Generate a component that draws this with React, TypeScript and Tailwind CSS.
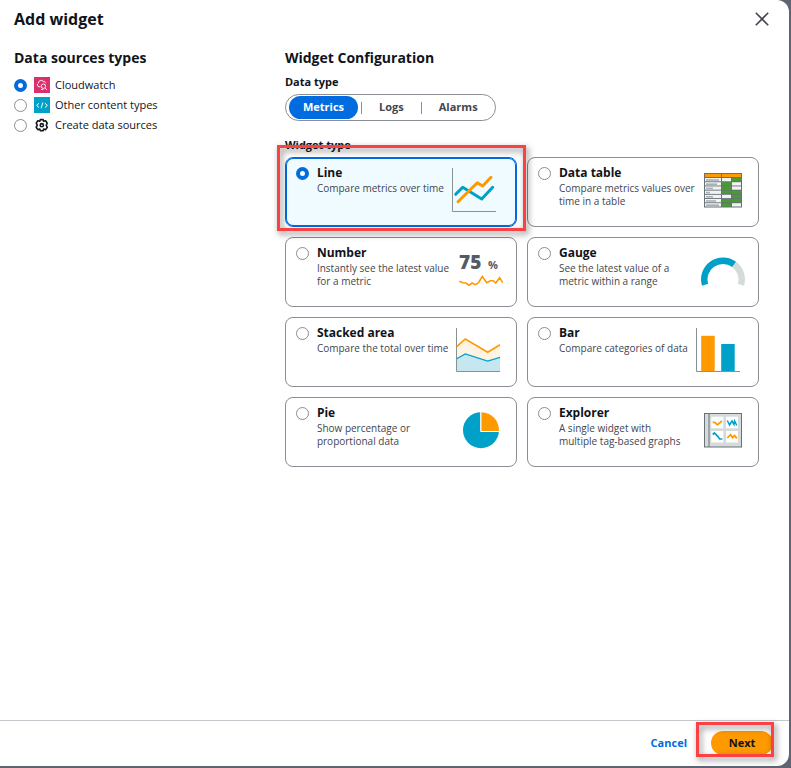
import { useState, type ReactNode } from "react";

const TEAL = "#00a1c9";
const ORANGE = "#ff9900";
const AXIS = "#879196";

function LineArt() {
  return (
    <>
      <path d="M.5 0V43.5H44" stroke={AXIS} />
      <path d="M3.7 26.3 10.7 19.3 29.7 31 40.7 19.3" stroke={TEAL} strokeWidth="3" strokeLinecap="round" strokeLinejoin="round" />
      <path d="M6 33.7 25.3 14.7 30.7 18 39 9.3" stroke={ORANGE} strokeWidth="3" strokeLinecap="round" strokeLinejoin="round" />
    </>
  );
}

const TABLE_ROWS: [number, boolean, boolean][] = [
  [13, false, true],
  [11, true, false],
  [7, true, false],
  [4, true, true],
  [7, false, true],
  [10, true, true],
  [13, true, false],
];

function TableArt() {
  return (
    <>
      <rect x="3" y="5" width="38" height="34.5" fill="#687078" />
      <rect x="4" y="6" width="16" height="3" fill={ORANGE} />
      <rect x="21" y="6" width="19" height="3" fill={ORANGE} />
      {TABLE_ROWS.map(([bar, second, third], i) => {
        const y = 10 + i * 4.2;
        return (
          <g key={i}>
            <rect x="4" y={y} width="16" height="3.3" fill="#f2f3f3" />
            <rect x="5" y={y + 1.2} width={bar} height="1.6" fill="#aab1b5" />
            <rect x="21" y={y} width="9" height="3.3" fill={second ? "#4a9a36" : "#f2f3f3"} />
            <rect x="31" y={y} width="9" height="3.3" fill={third ? "#4a9a36" : "#f2f3f3"} />
          </g>
        );
      })}
    </>
  );
}

function NumberArt() {
  return (
    <>
      <text x="0" y="21" fontSize="19" fontWeight="800" fill="#545b64">75</text>
      <text x="29" y="21" fontSize="11" fontWeight="700" fill="#545b64">%</text>
      <path
        d="M.3 33.3 3.7 34.7 7 35 10 37.3 13 35 16.3 36.7 19.3 35 23.3 28.5 27.7 34.7 31.3 32.7H34.3L36.7 35 40.7 29.7 43.7 34.7"
        stroke={ORANGE}
        strokeWidth="1.6"
      />
    </>
  );
}

function GaugeArt() {
  return (
    <>
      <path d="M33.1 16.3A18.7 18.7 0 0 1 39.9 36.8" stroke="#d5dbdb" strokeWidth="6.5" />
      <path d="M4.1 36.8A18.7 18.7 0 0 1 33.1 16.3" stroke={TEAL} strokeWidth="6.5" />
    </>
  );
}

function AreaArt() {
  return (
    <>
      <path d="M.7 18.7 9.3 11 31.7 24.3 44 16.7V43H.7Z" fill="#fff3e3" />
      <path d="M.7 30.7 9.3 26 31.7 33 44 29.3V43H.7Z" fill="#c6e6f0" />
      <path d="M.5 0V43.5H44" stroke={AXIS} />
      <path d="M.7 18.7 9.3 11 31.7 24.3 44 16.7" stroke={ORANGE} strokeWidth="1.6" />
      <path d="M.7 30.7 9.3 26 31.7 33 44 29.3" stroke={TEAL} strokeWidth="1.3" />
    </>
  );
}

function BarArt() {
  return (
    <>
      <path d="M.5 0V43.5H44" stroke={AXIS} />
      <rect x="5.2" y="7.8" width="13.5" height="35.2" fill={ORANGE} />
      <rect x="25.2" y="16" width="13.5" height="27" fill={TEAL} />
    </>
  );
}

function PieArt() {
  return (
    <>
      <circle cx="22" cy="22.2" r="18" fill={TEAL} />
      <path d="M21.7 23.5V3.5H41V23.5Z" fill="#fff" />
      <path d="M22.3 4.2A18 18 0 0 1 40 23H22.3Z" fill={ORANGE} />
      <path d="M21.7 3.5V23.5H41" stroke="#fff" />
    </>
  );
}

function ExplorerArt() {
  return (
    <>
      <rect x="3.5" y="5.5" width="37" height="33.5" fill="#d5dbdb" stroke="#687078" />
      <path d="M8 5.5V39" stroke="#687078" />
      <path d="M10.3 8.7h12v11.6h-12zM25 8.7h12v11.6H25zM10.3 23h12v11.6h-12zM25 23h12v11.6H25z" fill="#fff" />
      <path d="M11.7 14.4H13.8L16.3 16.8 21 13" stroke={ORANGE} strokeWidth="1.7" />
      <path d="M26.3 12.5 28.5 17 31 13 33 16.6 33.6 13 35.8 17.5" stroke={TEAL} strokeWidth="1.5" />
      <path d="M11.7 26.5 13.4 25 17 28.6 18.6 31H21.3" stroke={TEAL} strokeWidth="1.7" />
      <path d="M26.3 30 29.6 26.6 31.5 29.6 33.5 27.6 36 30.4" stroke={ORANGE} strokeWidth="1.7" />
    </>
  );
}

const WIDGETS: { name: string; text: string; art: ReactNode }[] = [
  { name: "Line", text: "Compare metrics over time", art: <LineArt /> },
  { name: "Data table", text: "Compare metrics values over\ntime in a table", art: <TableArt /> },
  { name: "Number", text: "Instantly see the latest value\nfor a metric", art: <NumberArt /> },
  { name: "Gauge", text: "See the latest value of a\nmetric within a range", art: <GaugeArt /> },
  { name: "Stacked area", text: "Compare the total over time", art: <AreaArt /> },
  { name: "Bar", text: "Compare categories of data", art: <BarArt /> },
  { name: "Pie", text: "Show percentage or\nproportional data", art: <PieArt /> },
  { name: "Explorer", text: "A single widget with\nmultiple tag-based graphs", art: <ExplorerArt /> },
];

const RADIO =
  "size-[13px] shrink-0 appearance-none rounded-full border border-[#8c8c94] bg-white checked:border-4 checked:border-[#006ce0]";

function Callout({ className }: { className: string }) {
  return (
    <div
      className={`pointer-events-none absolute z-10 border-3 border-[#fb4143] drop-shadow-[2px_3px_3px_rgba(0,0,0,0.5)] ${className}`}
    />
  );
}

const SOURCES: { name: string; icon: ReactNode }[] = [
  {
    name: "Cloudwatch",
    icon: (
      <svg viewBox="0 0 16 16" className="size-4" fill="none" stroke="#fff" strokeWidth=".9">
        <rect width="16" height="16" fill="#dc2f6e" stroke="none" />
        <path d="M6.3 9.8H5A1.9 1.9 0 0 1 4.4 6.2 2.7 2.7 0 0 1 9.2 4.4C10.6 4.2 11.4 5 11.6 6.2" />
        <circle cx="9.4" cy="9.2" r="2.2" />
        <path d="M11 10.9 13 13M7 12.4H9.4" />
      </svg>
    ),
  },
  {
    name: "Other content types",
    icon: (
      <svg viewBox="0 0 16 16" className="size-4" fill="none" stroke="#fff" strokeWidth="1">
        <rect width="16" height="16" fill="#00a1c9" stroke="none" />
        <path d="M5 6.3 2.6 8.4 5 10.5M11 6.3 13.4 8.4 11 10.5M8.9 5.5 7.1 11.3" />
      </svg>
    ),
  },
  {
    name: "Create data sources",
    icon: (
      <svg viewBox="0 0 16 16" className="size-4" fill="none" stroke="#16191f" strokeWidth="1.6" strokeLinejoin="round">
        <path d="M6.4 2.6H9.1L9.6 4.3 11.6 3.8 13.3 6.2 12.2 8.1 13.3 10.3 11.7 12.6 9.6 12.1 9.1 13.8H6.4L5.8 12.1 3.8 12.6 2.2 10.2 3.3 8.1 2.2 6.1 3.8 3.8 5.8 4.3Z" />
        <circle cx="7.8" cy="8.2" r="1.6" />
      </svg>
    ),
  },
];

export default function App() {
  const [source, setSource] = useState("Cloudwatch");
  const [dataType, setDataType] = useState("Metrics");
  const [widget, setWidget] = useState("Line");

  return (
    <div className="flex min-h-screen flex-col bg-[#5f6473] pr-0.5 pb-0.5 font-['Open_Sans','Noto_Sans',sans-serif] text-[#0f141a]">
      <div role="dialog" aria-labelledby="title" className="flex flex-1 flex-col rounded-r-xl bg-white">
        <header className="flex items-center justify-between pt-[7px] pr-5 pl-3.5">
          <h1 id="title" className="text-base leading-6 font-bold">Add widget</h1>
          <button type="button" aria-label="Close">
            <svg viewBox="0 0 14 14" className="size-3.5" stroke="#424650" strokeWidth="1.6">
              <path d="M.8.8 13.2 13.2M13.2.8.8 13.2" />
            </svg>
          </button>
        </header>

        <main className="grid flex-1 grid-cols-[4fr_7fr] content-start pt-[17px] pr-[30px] pl-3.5">
          <fieldset>
            <legend className="text-sm leading-5 font-bold">Data sources types</legend>
            <div className="mt-[7px]">
              {SOURCES.map((s) => (
                <label key={s.name} className="flex h-5 items-center text-[11px]">
                  <input
                    type="radio"
                    name="source"
                    className={RADIO}
                    checked={source === s.name}
                    onChange={() => setSource(s.name)}
                  />
                  <span className="mr-[5px] ml-[7px]">{s.icon}</span>
                  {s.name}
                </label>
              ))}
            </div>
          </fieldset>

          <section>
            <h2 className="text-sm leading-5 font-bold">Widget Configuration</h2>
            <h3 className="mt-1.5 text-[11px] leading-4 font-bold">Data type</h3>
            <div className="mt-1 inline-flex h-[27px] items-center rounded-full border border-[#8c8c94] px-[3px] text-[11px] font-bold">
              {["Metrics", "Logs", "Alarms"].map((t, i) => (
                <div key={t} className="flex items-center">
                  {i > 0 && <span className="mx-[3px] h-3 w-px bg-[#8c8c94]" />}
                  <button
                    type="button"
                    aria-pressed={dataType === t}
                    onClick={() => setDataType(t)}
                    className={`h-[23px] rounded-full px-3.5 ${dataType === t ? "bg-[#006ce0] text-white" : "text-[#424650]"}`}
                  >
                    {t}
                  </button>
                </div>
              ))}
            </div>

            <h3 className="mt-4 text-[11px] leading-4 font-bold">Widget type</h3>
            <div className="mt-1 grid grid-cols-2 gap-2.5">
              {WIDGETS.map((w) => {
                const selected = widget === w.name;
                const twoLines = w.text.includes("\n");
                return (
                  <label
                    key={w.name}
                    className={`relative flex h-[70px] items-start rounded-lg border px-2.5 ${
                      selected ? "border-[#006ce0] bg-[#f0fbff] ring-1 ring-[#006ce0] ring-inset" : "border-[#8c8c94]"
                    }`}
                  >
                    <input
                      type="radio"
                      name="widget"
                      className={`${RADIO} mt-[9px]`}
                      checked={selected}
                      onChange={() => setWidget(w.name)}
                    />
                    <span className={`mt-[7px] ml-2 flex flex-col gap-px ${twoLines ? "w-[134px]" : ""}`}>
                      <span className="text-xs leading-4 font-bold">{w.name}</span>
                      <span className="text-[10px] leading-[13px] whitespace-pre text-[#424650]">{w.text}</span>
                    </span>
                    <svg viewBox="0 0 44 44" className="mt-2.5 ml-2 size-11 shrink-0" fill="none">
                      {w.art}
                    </svg>
                    {w.name === "Line" && <Callout className="-top-[13px] -right-2.5 -bottom-[5px] -left-[9px]" />}
                  </label>
                );
              })}
            </div>
          </section>
        </main>

        <footer className="flex items-center justify-end gap-6 border-t border-[#c6c6cd] pt-2.5 pr-4 pb-[11px] text-[11px] font-bold">
          <button type="button" className="text-[#006ce0]">Cancel</button>
          <div className="relative">
            <button type="button" className="h-6 w-[62px] rounded-full bg-[#ff9900]">Next</button>
            <Callout className="-top-[9px] -right-px -bottom-0.5 -left-[15px]" />
          </div>
        </footer>
      </div>
    </div>
  );
}
